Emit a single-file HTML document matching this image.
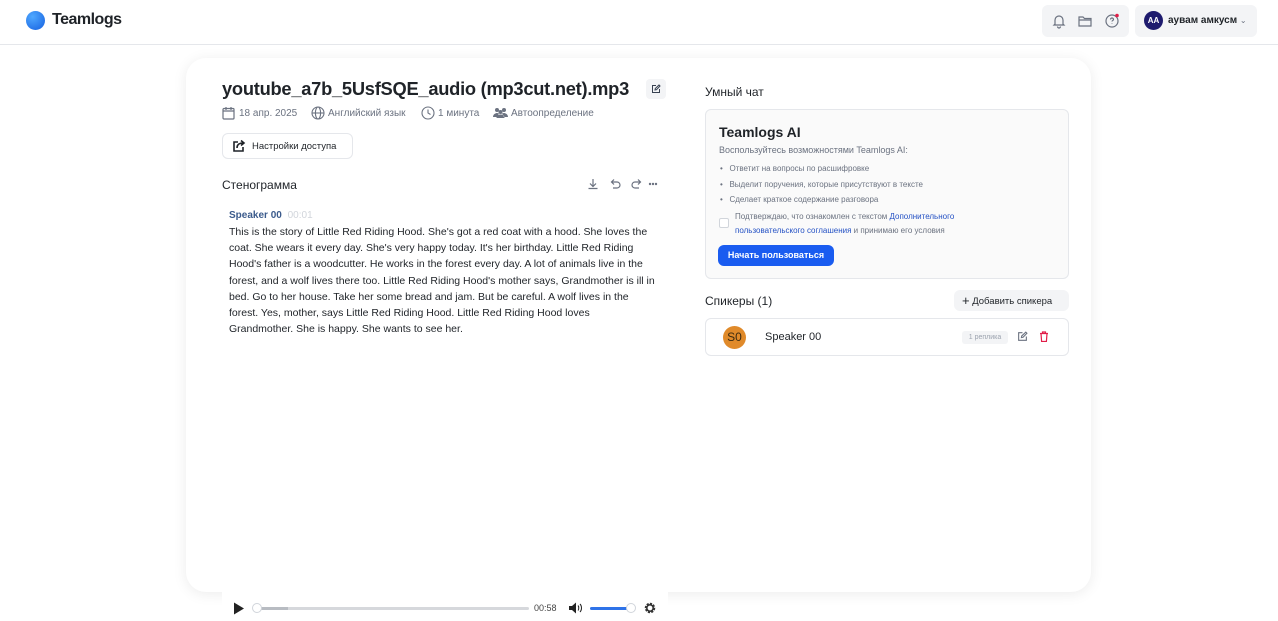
<!DOCTYPE html>
<html><head><meta charset="utf-8"><style>
*{box-sizing:border-box;margin:0;padding:0}
body{width:1278px;height:621px;overflow:hidden;background:#fff;font-family:"Liberation Sans",sans-serif;color:#1f2328;position:relative}
.abs{position:absolute}
.hdr{left:0;top:0;width:1278px;height:45px;border-bottom:1px solid #e5e7eb}
.card{left:186px;top:58px;width:905px;height:534px;border-radius:20px;background:#fff;box-shadow:0 2px 14px rgba(0,0,0,.08)}
.meta{font-size:10px;color:#6b7280}
</style></head><body>
<div class="abs hdr"></div>
<div class="abs" style="left:26px;top:11px;width:19px;height:19px;border-radius:50%;background:radial-gradient(circle at 35% 30%,#4fa8ff,#1560e0)"></div>
<div class="abs" style="left:52px;top:11px;font-size:16px;font-weight:bold;letter-spacing:-0.5px">Teamlogs</div>

<div class="abs" style="left:1042px;top:5px;width:87px;height:32px;border-radius:6px;background:#f3f4f6"></div>
<svg class="abs" style="left:1051px;top:13px" width="16" height="16" viewBox="0 0 16 16" fill="none" stroke="#6b7280" stroke-width="1.2"><path d="M4 11V7a4 4 0 018 0v4l1 1H3z M6.5 13.5a1.5 1.5 0 003 0"/></svg>
<svg class="abs" style="left:1077px;top:13px" width="16" height="16" viewBox="0 0 16 16" fill="none" stroke="#6b7280" stroke-width="1.2"><path d="M2 4h4l1.5 1.5H14V13H2z M2 7h12"/></svg>
<svg class="abs" style="left:1104px;top:12px" width="16" height="17" viewBox="0 0 16 17" fill="none" stroke="#6b7280" stroke-width="1.2"><circle cx="8" cy="9" r="6"/><path d="M6.5 7.5a1.5 1.5 0 113 0c0 1-1.5 1-1.5 2M8 11.5v.5"/><circle cx="13" cy="3.5" r="1.8" fill="#e11d48" stroke="none"/></svg>
<div class="abs" style="left:1135px;top:5px;width:122px;height:32px;border-radius:6px;background:#f3f4f6"></div>
<div class="abs" style="left:1144px;top:11px;width:19px;height:19px;border-radius:50%;background:#1e1b6e;color:#fff;font-size:8px;font-weight:bold;text-align:center;line-height:19px">AA</div>
<div class="abs" style="left:1168px;top:15px;font-size:10px;font-weight:bold">аувам амкусм <span style="font-weight:normal;color:#6b7280;font-size:8px">⌄</span></div>

<div class="abs card"></div>
<div class="abs" style="left:222px;top:78px;font-size:18.3px;font-weight:bold;letter-spacing:-0.25px">youtube_a7b_5UsfSQE_audio (mp3cut.net).mp3</div>
<div class="abs" style="left:646px;top:79px;width:20px;height:20px;border-radius:4px;background:#f3f4f6"></div>
<svg class="abs" style="left:651px;top:84px" width="10" height="10" viewBox="0 0 10 10" fill="none" stroke="#374151" stroke-width="1"><path d="M5 1.5H1.5v7h7V5 M4 6l.3-1.5L8 1l1 1-3.5 3.7z"/></svg>

<svg class="abs" style="left:222px;top:106px" width="13" height="14" viewBox="0 0 13 14" fill="none" stroke="#6b7280" stroke-width="1.2"><rect x="1" y="2.5" width="11" height="10.5" rx="1"/><path d="M1 5h11M4 1v3M9 1v3"/></svg>
<div class="abs meta" style="left:239px;top:108px">18 апр. 2025</div>
<svg class="abs" style="left:311px;top:106px" width="14" height="14" viewBox="0 0 14 14" fill="none" stroke="#6b7280" stroke-width="1.1"><circle cx="7" cy="7" r="6"/><ellipse cx="7" cy="7" rx="2.6" ry="6"/><path d="M1 7h12"/></svg>
<div class="abs meta" style="left:328px;top:108px">Английский язык</div>
<svg class="abs" style="left:421px;top:106px" width="14" height="14" viewBox="0 0 14 14" fill="none" stroke="#6b7280" stroke-width="1.1"><circle cx="7" cy="7" r="6"/><path d="M7 3.5V7l2.5 1.5"/></svg>
<div class="abs meta" style="left:438px;top:108px">1 минута</div>
<svg class="abs" style="left:493px;top:107px" width="15" height="11" viewBox="0 0 15 11" fill="#6b7280"><circle cx="4" cy="3" r="2"/><circle cx="11" cy="3" r="2"/><circle cx="7.5" cy="5" r="2"/><path d="M0 10c0-3 3-4 4-4s2 .5 2 .5L4 10z M15 10c0-3-3-4-4-4s-2 .5-2 .5L11 10z M3.5 11c0-2.5 2-3.5 4-3.5s4 1 4 3.5z"/></svg>
<div class="abs meta" style="left:511px;top:108px">Автоопределение</div>

<div class="abs" style="left:222px;top:133px;width:131px;height:26px;border:1px solid #e5e7eb;border-radius:6px"></div>
<svg class="abs" style="left:232px;top:139px" width="14" height="14" viewBox="0 0 14 14" fill="none" stroke="#1f2328" stroke-width="1.6"><path d="M6 3H2v9h9V8"/><path d="M5 9c0-4 3-5 6-5M9 1.5L12 4 9 6.5" /></svg>
<div class="abs" style="left:252px;top:141px;font-size:9.5px">Настройки доступа</div>

<div class="abs" style="left:222px;top:178px;font-size:12px">Стенограмма</div>
<svg class="abs" style="left:587px;top:178px" width="72" height="12" viewBox="0 0 72 12" fill="none" stroke="#6b7280" stroke-width="1.2"><path d="M6 1v7M3 5.5L6 8.5 9 5.5M1.5 10.5h9"/><path d="M25 4h5a3 3 0 010 6h-4M27 1.5L24.5 4 27 6.5"/><path d="M53 4h-5a3 3 0 000 6h4M51 1.5L53.5 4 51 6.5"/><circle cx="66" cy="6" r=".6" fill="#6b7280"/><circle cx="69" cy="6" r=".6" fill="#6b7280"/><circle cx="63" cy="6" r=".6" fill="#6b7280"/></svg>

<div class="abs" style="left:229px;top:210px;font-size:10px;font-weight:bold;color:#3b5b8c">Speaker 00 <span style="color:#d1d5db;font-weight:normal;margin-left:3px">00:01</span></div>
<div class="abs" style="left:229px;top:224px;font-size:10.5px;line-height:16.2px;color:#1f2328;white-space:nowrap">This is the story of Little Red Riding Hood. She's got a red coat with a hood. She loves the<br>coat. She wears it every day. She's very happy today. It's her birthday. Little Red Riding<br>Hood's father is a woodcutter. He works in the forest every day. A lot of animals live in the<br>forest, and a wolf lives there too. Little Red Riding Hood's mother says, Grandmother is ill in<br>bed. Go to her house. Take her some bread and jam. But be careful. A wolf lives in the<br>forest. Yes, mother, says Little Red Riding Hood. Little Red Riding Hood loves<br>Grandmother. She is happy. She wants to see her.</div>

<div class="abs" style="left:705px;top:85px;font-size:12px">Умный чат</div>
<div class="abs" style="left:705px;top:109px;width:364px;height:170px;border:1px solid #e5e7eb;border-radius:6px;background:#fafafa"></div>
<div class="abs" style="left:719px;top:124px;font-size:14px;font-weight:bold">Teamlogs AI</div>
<div class="abs" style="left:719px;top:145px;font-size:9px;color:#6b7280">Воспользуйтесь возможностями Teamlogs AI:</div>
<div class="abs" style="left:720px;top:161px;font-size:8px;color:#6b7280;line-height:15.5px">•&nbsp;&nbsp; Ответит на вопросы по расшифровке<br>•&nbsp;&nbsp; Выделит поручения, которые присутствуют в тексте<br>•&nbsp;&nbsp; Сделает краткое содержание разговора</div>
<div class="abs" style="left:719px;top:218px;width:10px;height:10px;border:1px solid #d1d5db;border-radius:2px;background:#fff"></div>
<div class="abs" style="left:735px;top:210px;font-size:8px;color:#6b7280;line-height:14px">Подтверждаю, что ознакомлен с текстом <span style="color:#2451c4">Дополнительного<br>пользовательского соглашения</span> и принимаю его условия</div>
<div class="abs" style="left:718px;top:245px;width:116px;height:21px;border-radius:6px;background:#1a5cf0;color:#fff;font-size:9px;font-weight:bold;text-align:center;line-height:21px">Начать пользоваться</div>

<div class="abs" style="left:705px;top:294px;font-size:12px">Спикеры (1)</div>
<div class="abs" style="left:954px;top:290px;width:115px;height:21px;border-radius:6px;background:#f3f4f6;font-size:9.5px;line-height:21px;padding-left:8px"><span style="font-size:13px;vertical-align:-1px">+</span> Добавить спикера</div>
<div class="abs" style="left:705px;top:318px;width:364px;height:38px;border:1px solid #e5e7eb;border-radius:6px"></div>
<div class="abs" style="left:723px;top:326px;width:23px;height:23px;border-radius:50%;background:#e08a2a;color:#3b2a10;font-size:12px;text-align:center;line-height:23px">S0</div>
<div class="abs" style="left:765px;top:331px;font-size:11px">Speaker 00</div>
<div class="abs" style="left:962px;top:331px;width:46px;height:13px;border-radius:3px;background:#f3f4f6;font-size:7px;color:#9ca3af;text-align:center;line-height:13px">1 реплика</div>
<svg class="abs" style="left:1017px;top:331px" width="11" height="11" viewBox="0 0 10 10" fill="none" stroke="#6b7280" stroke-width="1"><path d="M5 1.5H1.5v7h7V5 M4 6l.3-1.5L8 1l1 1-3.5 3.7z"/></svg>
<svg class="abs" style="left:1039px;top:331px" width="10" height="11" viewBox="0 0 10 11" fill="none" stroke="#e11d48" stroke-width="1.2"><path d="M1 2.5h8M3.5 2.5V1h3v1.5M2 2.5l.6 8h4.8l.6-8"/></svg>

<div class="abs" style="left:222px;top:592px;width:446px;height:29px;background:#fff"></div>
<svg class="abs" style="left:233px;top:602px" width="12" height="13" viewBox="0 0 12 13"><path d="M1 0.5l10 6-10 6z" fill="#222"/></svg>
<div class="abs" style="left:256px;top:607px;width:273px;height:3px;border-radius:2px;background:#d6d8dc"></div>
<div class="abs" style="left:256px;top:607px;width:32px;height:3px;background:#b8bcc2"></div>
<div class="abs" style="left:252px;top:603px;width:10px;height:10px;border-radius:50%;background:#fff;border:1px solid #d1d5db"></div>
<div class="abs" style="left:534px;top:603px;font-size:9px;color:#444">00:58</div>
<svg class="abs" style="left:568px;top:602px" width="14" height="12" viewBox="0 0 14 12"><path d="M1 4h3l4-3.5v11L4 8H1z" fill="#222"/><path d="M10 3.5c1 1 1 4 0 5M12 2c2 2 2 6 0 8" stroke="#222" fill="none"/></svg>
<div class="abs" style="left:590px;top:607px;width:41px;height:3px;border-radius:2px;background:#2f73e8"></div>
<div class="abs" style="left:626px;top:603px;width:10px;height:10px;border-radius:50%;background:#fff;border:1px solid #d1d5db"></div>
<svg class="abs" style="left:644px;top:602px" width="12" height="12" viewBox="0 0 12 12"><circle cx="6" cy="6" r="4" fill="none" stroke="#333" stroke-width="2.5" stroke-dasharray="2 1.1"/><circle cx="6" cy="6" r="3.2" fill="none" stroke="#333" stroke-width="1.6"/></svg>
</body></html>
